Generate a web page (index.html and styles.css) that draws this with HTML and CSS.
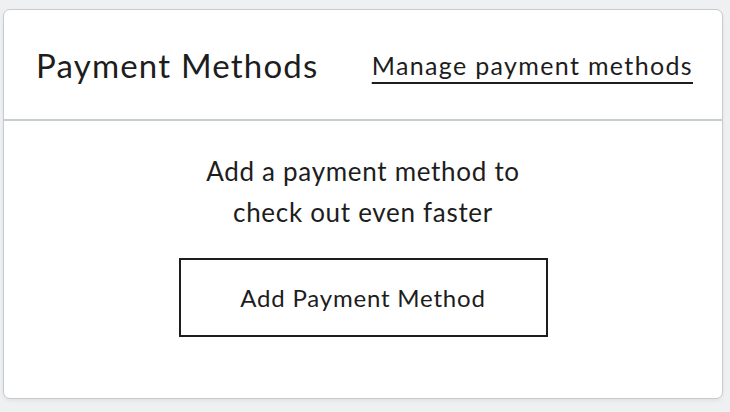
FILE: index.html
```html
<!DOCTYPE html>
<html>
<head>
<meta charset="utf-8">
<link rel="stylesheet" href="styles.css">
</head>
<body>
<section class="card">
  <header class="card-header">
    <h2 class="title">Payment Methods</h2>
    <a class="manage" href="#">Manage payment methods</a>
  </header>
  <div class="card-body">
    <p class="message">Add a payment method to<br>check out even faster</p>
    <button class="add-btn" type="button">Add Payment Method</button>
  </div>
</section>
</body>
</html>
```
FILE: styles.css
```css
html, body {
  margin: 0;
  padding: 0;
}
body {
  background: #eff0f2;
  font-family: Lato, "Noto Sans", sans-serif;
  color: #1d1d1d;
  padding: 9px 7px 0 3px;
  width: 730px;
  height: 412px;
  box-sizing: border-box;
}
.card {
  width: 720px;
  height: 390px;
  box-sizing: border-box;
  background: #fff;
  border: 1.5px solid #c6cbcd;
  border-radius: 7px;
  box-shadow: 0 2px 4px rgba(0,0,0,0.06);
  display: flex;
  flex-direction: column;
}
.card-header {
  height: 111px;
  box-sizing: border-box;
  border-bottom: 2px solid #c8cdcf;
  display: flex;
  align-items: center;
  justify-content: space-between;
  padding: 0 29px 0 32px;
}
.title {
  margin: 0;
  font-weight: 400;
  font-size: 33px;
  letter-spacing: 1.2px;
}
.manage {
  color: #1d1d1d;
  font-size: 25px;
  letter-spacing: 1.35px;
  text-decoration: underline;
  text-decoration-thickness: 2px;
  text-underline-offset: 7px;
}
.card-body {
  display: flex;
  flex-direction: column;
  align-items: center;
  padding-top: 30px;
}
.message {
  margin: 0;
  text-align: center;
  font-size: 26px;
  letter-spacing: 0.7px;
  line-height: 41px;
}
.add-btn {
  margin-top: 25px;
  width: 369px;
  height: 79px;
  background: #fff;
  border: 2px solid #1d1d1d;
  border-radius: 0;
  font-family: inherit;
  font-size: 24px;
  letter-spacing: 0.8px;
  color: #1d1d1d;
  padding: 0;
}
```
